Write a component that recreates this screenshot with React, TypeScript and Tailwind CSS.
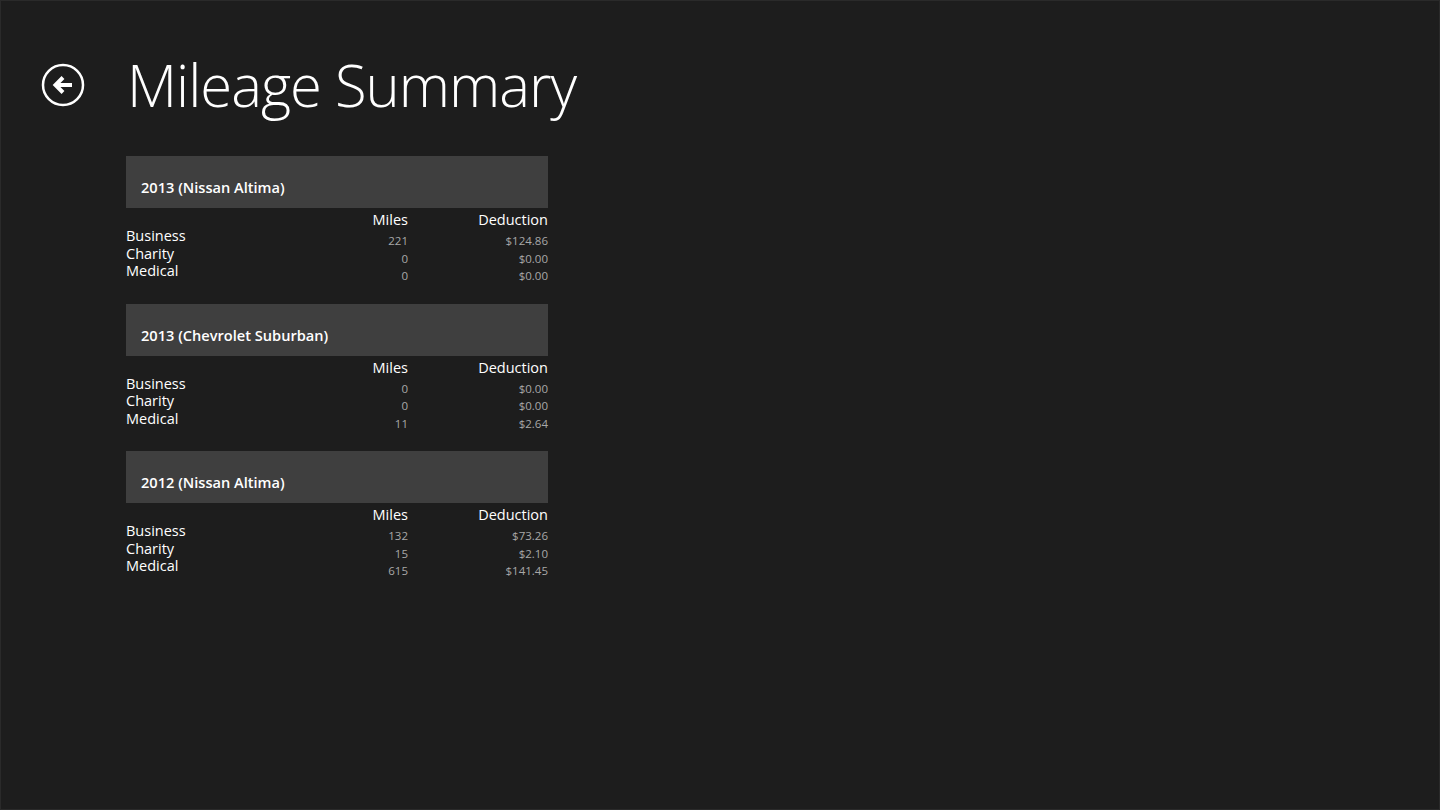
import React from 'react'

type Row = { label: string; miles: string; deduction: string }
type Vehicle = { title: string; rows: Row[] }

const vehicles: Vehicle[] = [
    {
        title: '2013 (Nissan Altima)',
        rows: [
            { label: 'Business', miles: '221', deduction: '$124.86' },
            { label: 'Charity', miles: '0', deduction: '$0.00' },
            { label: 'Medical', miles: '0', deduction: '$0.00' },
        ],
    },
    {
        title: '2013 (Chevrolet Suburban)',
        rows: [
            { label: 'Business', miles: '0', deduction: '$0.00' },
            { label: 'Charity', miles: '0', deduction: '$0.00' },
            { label: 'Medical', miles: '11', deduction: '$2.64' },
        ],
    },
    {
        title: '2012 (Nissan Altima)',
        rows: [
            { label: 'Business', miles: '132', deduction: '$73.26' },
            { label: 'Charity', miles: '15', deduction: '$2.10' },
            { label: 'Medical', miles: '615', deduction: '$141.45' },
        ],
    },
]

function BackButton() {
    return (
        <svg width="46" height="46" viewBox="0 0 46 46" className="shrink-0 mt-[6px]">
            <circle cx="23" cy="23" r="20" fill="none" stroke="#ffffff" strokeWidth="2.5" />
            <path d="M32 23 H16 M23 15.5 L15.5 23 L23 30.5" fill="none" stroke="#ffffff" strokeWidth="4" strokeLinejoin="miter" strokeLinecap="butt" />
        </svg>
    )
}

function VehicleCard({ vehicle }: { vehicle: Vehicle }) {
    return (
        <div className="w-[422px]">
            <div className="h-[52px] bg-[#3f3f3f] flex items-end pl-[15px] pb-[13px]">
                <span className="text-[14.6px] font-semibold text-white leading-none">{vehicle.title}</span>
            </div>
            <div className="grid grid-cols-[1fr_140px] text-white">
                <div className="flex justify-end h-[24px] items-center text-[14.5px]">Miles</div>
                <div className="flex justify-end h-[24px] items-center text-[14.5px]">Deduction</div>
            </div>
            <div className="-mt-[5px]">
                {vehicle.rows.map(row => (
                    <div key={row.label} className="grid grid-cols-[1fr_140px] h-[17.5px]">
                        <div className="flex justify-between">
                            <span className="text-[14.5px] leading-[17px] text-white">{row.label}</span>
                            <span className="text-[11.5px] leading-[17px] text-[#a8a8a8] pt-[5px]">{row.miles}</span>
                        </div>
                        <span className="text-[11.5px] leading-[17px] text-[#a8a8a8] pt-[5px] text-right">{row.deduction}</span>
                    </div>
                ))}
            </div>
        </div>
    )
}

export default function App() {
    return (
        <div className="w-[1440px] h-[810px] bg-[#1d1d1d] border border-[#2a2a2a] overflow-hidden" style={{ fontFamily: '"Open Sans", "Noto Sans", sans-serif' }}>
            <div className="flex items-start pt-[55px] pl-[39px] gap-[41px]">
                <BackButton />
                <h1 className="text-[58px] font-light text-white leading-none tracking-[-1px]">Mileage Summary</h1>
            </div>
            <div className="flex flex-col gap-[24px] pl-[125px] pt-[42px]">
                {vehicles.map(v => <VehicleCard key={v.title} vehicle={v} />)}
            </div>
        </div>
    )
}
